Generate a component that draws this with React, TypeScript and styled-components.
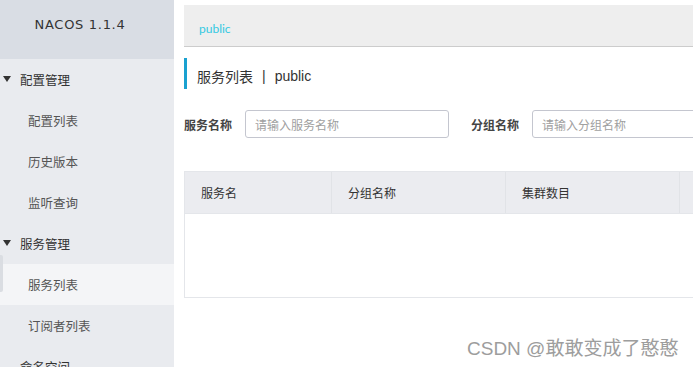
import styled, { createGlobalStyle } from "styled-components";

const GlobalStyle = createGlobalStyle`
  html, body {
    margin: 0;
    padding: 0;
    background: #fff;
  }
  body {
    font-family: "Liberation Sans", "Noto Sans CJK SC", sans-serif;
    color: #333;
  }
`;

const menu = [
  { label: "配置管理", group: true },
  { label: "配置列表" },
  { label: "历史版本" },
  { label: "监听查询" },
  { label: "服务管理", group: true },
  { label: "服务列表", active: true },
  { label: "订阅者列表" },
  { label: "命名空间", group: true, plain: true },
];

const columns = [
  { title: "服务名", width: 147 },
  { title: "分组名称", width: 174 },
  { title: "集群数目", width: 174 },
  { title: "", width: 40 },
];

const App = () => {
  return (
    <Page>
      <GlobalStyle />
      <Sidebar>
        <Brand>NACOS 1.1.4</Brand>
        {menu.map((item) => (
          <MenuItem key={item.label} $group={item.group} $active={item.active}>
            {item.group && !item.plain && <Caret />}
            {item.active && <ActiveMark />}
            {item.label}
          </MenuItem>
        ))}
      </Sidebar>
      <Main>
        <NamespaceBar>
          <Namespace>public</Namespace>
        </NamespaceBar>
        <Title>
          服务列表<Divider>|</Divider>public
        </Title>
        <SearchRow>
          <Label>服务名称</Label>
          <Input placeholder="请输入服务名称" $width={204} />
          <Label $gap={22}>分组名称</Label>
          <Input placeholder="请输入分组名称" $width={180} />
        </SearchRow>
        <Table>
          <HeadRow>
            {columns.map((c, i) => (
              <HeadCell key={i} $width={c.width}>
                {c.title}
              </HeadCell>
            ))}
          </HeadRow>
          <Body />
        </Table>
      </Main>
      <Watermark>CSDN @敢敢变成了憨憨</Watermark>
    </Page>
  );
};

export default App;

const Page = styled.div`
  position: relative;
  display: flex;
  width: 693px;
  height: 367px;
  overflow: hidden;
`;

const Sidebar = styled.nav`
  width: 174px;
  flex-shrink: 0;
  background: #e9ebef;
`;

const Brand = styled.div`
  height: 59px;
  display: flex;
  align-items: center;
  justify-content: center;
  background: #d9dde4;
  font-family: "DejaVu Sans", "Liberation Sans", sans-serif;
  font-size: 13px;
  letter-spacing: 0.7px;
  color: #333;
  padding: 0 14px 10px 0;
  box-sizing: border-box;
`;

const MenuItem = styled.div<{ $group?: boolean; $active?: boolean }>`
  position: relative;
  height: 41px;
  display: flex;
  align-items: center;
  padding-left: ${(p) => (p.$group ? 20 : 28)}px;
  font-family: "Noto Sans CJK SC", sans-serif;
  font-size: 12.5px;
  color: ${(p) => (p.$group ? "#333" : "#555")};
  background: ${(p) => (p.$active ? "#f4f5f7" : "transparent")};
`;

const Caret = styled.span`
  position: absolute;
  left: 3px;
  top: 17px;
  width: 0;
  height: 0;
  border-left: 4px solid transparent;
  border-right: 4px solid transparent;
  border-top: 6px solid #333;
`;

const ActiveMark = styled.span`
  position: absolute;
  left: 0;
  top: -9px;
  width: 3px;
  height: 37px;
  background: #dadde2;
  border-radius: 0 2px 2px 0;
`;

const Main = styled.main`
  flex: 1;
  min-width: 0;
  padding: 5px 0 0 10px;
  display: flex;
  flex-direction: column;
`;

const NamespaceBar = styled.div`
  height: 42px;
  display: flex;
  align-items: center;
  padding: 5px 0 0 15px;
  background: #eeeeee;
  border-bottom: 1px solid #cccccc;
  box-sizing: border-box;
`;

const Namespace = styled.span`
  font-family: "Lato", "Liberation Sans", sans-serif;
  font-size: 12px;
  color: #33c9e2;
`;

const Title = styled.div`
  margin-top: 11px;
  height: 31px;
  display: flex;
  align-items: center;
  border-left: 3px solid #1aa1d0;
  padding: 5px 0 0 10px;
  box-sizing: border-box;
  font-family: "Liberation Sans", "Noto Sans CJK SC", sans-serif;
  font-size: 14px;
  color: #333;
`;

const Divider = styled.span`
  margin: 0 9px;
`;

const SearchRow = styled.div`
  margin-top: 21px;
  display: flex;
  align-items: center;
`;

const Label = styled.span<{ $gap?: number }>`
  flex-shrink: 0;
  white-space: nowrap;
  margin-left: ${(p) => p.$gap ?? 0}px;
  margin-right: 13px;
  font-family: "Noto Sans CJK SC", sans-serif;
  font-size: 12px;
  font-weight: 700;
  color: #444;
`;

const Input = styled.input<{ $width: number }>`
  width: ${(p) => p.$width}px;
  flex-shrink: 0;
  height: 28px;
  box-sizing: border-box;
  border: 1px solid #c4c6cf;
  border-radius: 3px;
  padding: 0 9px;
  font-family: "Noto Sans CJK SC", sans-serif;
  font-size: 12px;
  outline: none;
  &::placeholder {
    color: #a0a0a0;
  }
`;

const Table = styled.div`
  margin-top: 33px;
  border: 1px solid #e4e6ea;
  border-right: none;
  width: 540px;
`;

const HeadRow = styled.div`
  display: flex;
  height: 42px;
  background: #ebecf0;
  border-bottom: 1px solid #e4e6ea;
  box-sizing: border-box;
`;

const HeadCell = styled.div<{ $width: number }>`
  width: ${(p) => p.$width}px;
  flex-shrink: 0;
  display: flex;
  align-items: center;
  padding-left: 16px;
  box-sizing: border-box;
  border-right: 1px solid #e1e3e7;
  font-family: "Noto Sans CJK SC", sans-serif;
  font-size: 12px;
  color: #333;
`;

const Body = styled.div`
  height: 83px;
  background: #fff;
`;

const Watermark = styled.div`
  position: absolute;
  left: 467px;
  top: 333px;
  font-family: "Liberation Sans", "Noto Sans CJK SC", sans-serif;
  font-size: 19px;
  color: #9d9d9d;
`;
